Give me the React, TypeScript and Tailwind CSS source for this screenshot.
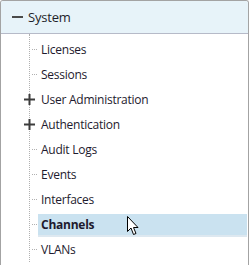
const items = [
  { label: "Licenses" },
  { label: "Sessions" },
  { label: "User Administration", expandable: true },
  { label: "Authentication", expandable: true },
  { label: "Audit Logs" },
  { label: "Events" },
  { label: "Interfaces" },
  { label: "Channels", selected: true },
  { label: "VLANs" },
];

function Plus() {
  return (
    <svg width="11" height="11" viewBox="0 0 11 11" className="block">
      <rect x="0" y="4.5" width="11" height="2" fill="#3c3c3c" />
      <rect x="4.5" y="0" width="2" height="11" fill="#3c3c3c" />
    </svg>
  );
}

function Cursor() {
  return (
    <svg width="12" height="20" viewBox="0 0 12 20" className="block">
      <path
        d="M0.5 0.5 L0.5 15.5 L4 12 L6.5 18.5 L9 17.5 L6.5 11.5 L11 11.5 Z"
        fill="#fff"
        stroke="#000"
        strokeWidth="1"
      />
    </svg>
  );
}

export default function App() {
  return (
    <div className="w-[250px] h-[265px] bg-white font-['Open_Sans','Noto_Sans',sans-serif]">
      <div className="w-[249px] h-[265px] border border-b-0 border-[#a3a3a3] rounded-t-[3px] overflow-hidden">
        <div className="h-[33px] bg-[#e7f3f9] border-b border-[#b6bac8] flex items-center gap-[5px] pl-[11px]">
          <div className="w-[11px] h-[2px] bg-[#4a4a4a]" />
          <span className="text-[13px] text-[#1f1f2a] leading-none tracking-[-0.2px]">System</span>
        </div>
        <div className="relative pt-[3px]">
          {/* tree guide line */}
          <div className="absolute left-[28px] top-0 bottom-0 border-l border-dotted border-[#b0b0b0]" />
          {items.map((it) => (
            <div key={it.label} className="relative h-[25px] flex items-center pr-[1px]">
              <div className={"w-[37px] flex items-center " + (it.expandable ? "pl-[23px]" : "pl-[31px]")}>
                {it.expandable ? (
                  <div className="bg-white">
                    <Plus />
                  </div>
                ) : (
                  <div className="w-[5px] border-t border-dotted border-[#b0b0b0]" />
                )}
              </div>
              <div
                className={
                  "flex-1 h-[21px] flex items-center pl-[3px] text-[12px] tracking-[-0.25px] text-[#1e1a2e] " +
                  (it.selected ? "bg-[#cae2f0] font-bold shadow-[0_2px_0_#dde8f0]" : "")
                }
              >
                {it.label}
              </div>
              {it.selected && (
                <div className="absolute left-[126px] top-[4px]">
                  <Cursor />
                </div>
              )}
            </div>
          ))}
        </div>
      </div>
    </div>
  );
}
